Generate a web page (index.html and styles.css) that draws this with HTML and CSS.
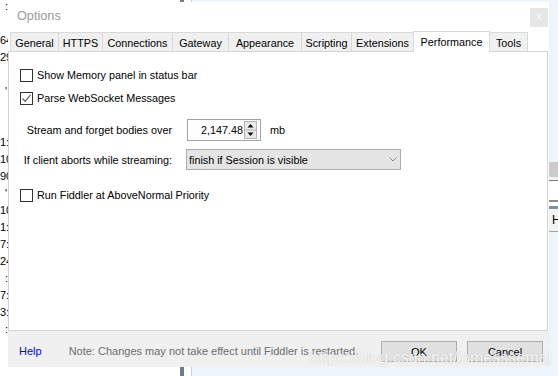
FILE: index.html
```html
<!DOCTYPE html>
<html>
<head>
<meta charset="utf-8">
<title>Options</title>
<link rel="stylesheet" href="styles.css">
</head>
<body>
<div class="desktop">
  <div class="pane-left">
    <div class="rows">
      <div class="row ind">:</div>
      <div class="row"></div>
      <div class="row">64</div>
      <div class="row">29</div>
      <div class="row"></div>
      <div class="row ind">'</div>
      <div class="row"></div>
      <div class="row"></div>
      <div class="row">1:</div>
      <div class="row">10</div>
      <div class="row">90</div>
      <div class="row ind">'</div>
      <div class="row">10</div>
      <div class="row">1:</div>
      <div class="row">7:</div>
      <div class="row">24</div>
      <div class="row ind">:</div>
      <div class="row">7:</div>
      <div class="row">3:</div>
      <div class="row ind">:</div>
    </div>
  </div>
  <div class="divider"><div class="bar"></div><div class="gap"></div><div class="line"></div></div>
  <div class="pane-right">
    <div class="strip">
      <div class="s-block"></div>
      <div class="s-gap"></div>
      <div class="s-dark"></div>
      <div class="s-white"></div>
      <div class="s-grey"></div>
      <div class="s-white2"></div>
      <div class="s-bluebar"></div>
      <div class="s-head">H</div>
      <div class="s-line"></div>
    </div>
  </div>
</div>

<div class="dialog">
  <div class="titlebar">
    <span class="title">Options</span>
    <span class="close">x</span>
  </div>
  <div class="tabs">
    <div class="tab t-general">General</div>
    <div class="tab t-https">HTTPS</div>
    <div class="tab t-conn">Connections</div>
    <div class="tab t-gateway">Gateway</div>
    <div class="tab t-appear">Appearance</div>
    <div class="tab t-script">Scripting</div>
    <div class="tab t-ext">Extensions</div>
    <div class="tab t-perf selected">Performance</div>
    <div class="tab t-tools">Tools</div>
  </div>
  <div class="panel">
    <div class="check-row r1">
      <span class="box"></span><span class="cb-label">Show Memory panel in status bar</span>
    </div>
    <div class="check-row r2">
      <span class="box"><svg width="11" height="11" viewBox="0 0 11 11"><path d="M1.5 5.5 L4.2 8.3 L9.5 1.8" fill="none" stroke="#5a5a5a" stroke-width="1.1"/></svg></span><span class="cb-label">Parse WebSocket Messages</span>
    </div>
    <div class="form-row r3">
      <span class="f-label">Stream and forget bodies over</span>
      <span class="num">
        <span class="num-val">2,147.48</span>
        <svg class="spin" width="13" height="18" viewBox="0 0 13 18">
          <rect x="0.5" y="0.5" width="12" height="17" fill="#e9e9e9" stroke="#b4b4b4"/>
          <line x1="0.5" y1="9" x2="12.5" y2="9" stroke="#b4b4b4"/>
          <path d="M6.5 3 L9.5 6.5 L3.5 6.5 Z" fill="#111"/>
          <path d="M3.5 11.5 L9.5 11.5 L6.5 15 Z" fill="#111"/>
        </svg>
      </span>
      <span class="unit">mb</span>
    </div>
    <div class="form-row r4">
      <span class="f-label">If client aborts while streaming:</span>
      <span class="select">
        <span class="sel-val">finish if Session is visible</span>
        <svg class="chev" width="8" height="5" viewBox="0 0 8 5"><path d="M0.5 0.5 L4 4 L7.5 0.5" fill="none" stroke="#8a8a8a" stroke-width="1"/></svg>
      </span>
    </div>
    <div class="check-row r5">
      <span class="box"></span><span class="cb-label">Run Fiddler at AboveNormal Priority</span>
    </div>
  </div>
  <div class="footer">
    <span class="help">Help</span>
    <span class="note">Note: Changes may not take effect until Fiddler is restarted.</span>
    <span class="btn ok">OK</span>
    <span class="btn cancel">Cancel</span>
  </div>
</div>

<div class="watermark">https://blog.csdn.net/jamesssemaj</div>
</body>
</html>
```

FILE: styles.css
```css
* { box-sizing: border-box; }
html, body { margin: 0; padding: 0; }
body {
  width: 558px;
  height: 376px;
  overflow: hidden;
  position: relative;
  background: #fff;
  color: #000;
  font-family: "Liberation Sans", Arial, sans-serif;
  font-size: 10.8px;
}

/* background desktop */
.desktop { display: flex; height: 376px; }
.pane-left { width: 180px; background: #fff; overflow: hidden; }
.rows { margin-top: -2px; font-size: 11px; line-height: 17px; }
.row { height: 17px; white-space: nowrap; }
.row.ind { padding-left: 5px; }
.divider { display: flex; width: 12px; }
.divider .bar { width: 4px; background: #6f7b88; }
.divider .gap { width: 7px; background: #fff; }
.divider .line { width: 1px; background: #c6cfd9; }
.pane-right {
  flex: 1;
  background: #edf4fc;
  display: flex;
  flex-direction: column;
  align-items: flex-end;
  padding-top: 162px;
}
.strip { width: 9px; }
.s-block { height: 15px; background: #cbcbcb; }
.s-gap { height: 3px; background: #f4f4f4; }
.s-dark { height: 1px; background: #7a7a7a; }
.s-white { height: 19px; background: #fff; }
.s-grey { height: 2px; background: #8c8c8c; }
.s-white2 { height: 4px; background: #fff; }
.s-bluebar { height: 3px; background: #7b90a6; }
.s-head { height: 22px; background: #f3f3f3; font-size: 12px; line-height: 22px; padding-left: 3px; overflow: hidden; }
.s-line { height: 1px; background: #a0a0a0; }

/* dialog window */
.dialog {
  position: absolute;
  left: 8px;
  top: 2px;
  width: 541px;
  height: 365px;
  background: #fff;
  display: flex;
  flex-direction: column;
}
.titlebar {
  height: 29px;
  display: flex;
  justify-content: space-between;
  align-items: flex-start;
  padding-left: 9px;
}
.title {
  margin-top: 7px;
  font-size: 12.7px;
  line-height: 14px;
  color: #9b9b9b;
}
.close {
  margin-top: 6px;
  margin-right: 1px;
  width: 18px;
  height: 19px;
  background: #e6e6e6;
  color: #fbfbfb;
  font-size: 10px;
  line-height: 18px;
  text-align: center;
}

.tabs {
  height: 20px;
  display: flex;
  align-items: flex-end;
  padding-left: 2px;
}
.tab {
  height: 19px;
  margin-right: -1px;
  border: 1px solid #d9d9d9;
  border-bottom: none;
  background: #f0f0f0;
  display: flex;
  align-items: center;
  justify-content: center;
  padding-top: 2px;
  white-space: nowrap;
}
.tab.selected {
  height: 21px;
  margin-bottom: -1px;
  background: #fff;
  position: relative;
  z-index: 1;
  padding-top: 0;
  padding-bottom: 1px;
}
.t-general { width: 49px; }
.t-https { width: 45px; }
.t-conn { width: 71px; }
.t-gateway { width: 57px; }
.t-appear { width: 74px; }
.t-script { width: 51px; }
.t-ext { width: 63px; }
.t-perf { width: 77px; }
.t-tools { width: 39px; }

.panel {
  height: 280px;
  margin-right: 1px;
  border: 1px solid #d4d4d4;
  background: #fff;
  padding-top: 14px;
  display: flex;
  flex-direction: column;
}
.check-row {
  height: 18px;
  display: flex;
  align-items: center;
  padding-left: 11px;
}
.r2 { margin-top: 5px; }
.r5 { margin-top: 16px; }
.box {
  width: 13px;
  height: 13px;
  border: 1px solid #333;
  background: #fff;
  display: flex;
  align-items: center;
  justify-content: center;
}
.box svg { display: block; }
.cb-label { margin-left: 4px; white-space: nowrap; }

.form-row {
  display: flex;
  align-items: center;
}
.r3 { height: 22px; margin-top: 12px; }
.r4 { height: 21px; margin-top: 8px; }
.f-label {
  width: 163px;
  text-align: right;
  white-space: nowrap;
}
.num {
  margin-left: 15px;
  width: 74px;
  height: 22px;
  border: 1px solid #a3a3a3;
  background: #fff;
  display: flex;
  align-items: center;
  padding: 0 3px 0 0;
}
.num-val { flex: 1; text-align: right; padding-right: 1px; }
.spin { display: block; }
.unit { margin-left: 9px; }
.select {
  margin-left: 14px;
  width: 215px;
  height: 21px;
  border: 1px solid #adadad;
  background: #e5e5e5;
  display: flex;
  align-items: center;
  justify-content: space-between;
  padding: 0 3px 0 2px;
}
.chev { display: block; }

.footer {
  height: 36px;
  background: #f0f0f0;
  display: flex;
  align-items: flex-start;
  padding: 10px 6px 0 11px;
  font-size: 11px;
}
.help, .note { line-height: 21px; white-space: nowrap; }
.help { color: #0000ff; }
.note { margin-left: 27px; color: #6d6d6d; }
.btn {
  width: 76px;
  height: 21px;
  border: 1px solid #adadad;
  background: #e1e1e1;
  display: flex;
  align-items: center;
  justify-content: center;
}
.ok { margin-left: auto; }
.cancel { margin-left: 10px; }

.watermark {
  position: absolute;
  left: 310px;
  top: 349px;
  font-size: 16px;
  line-height: 18px;
  color: rgba(255, 255, 255, 0.9);
  text-shadow: 0 0 1px rgba(0, 0, 0, 0.25);
  white-space: nowrap;
}
```
